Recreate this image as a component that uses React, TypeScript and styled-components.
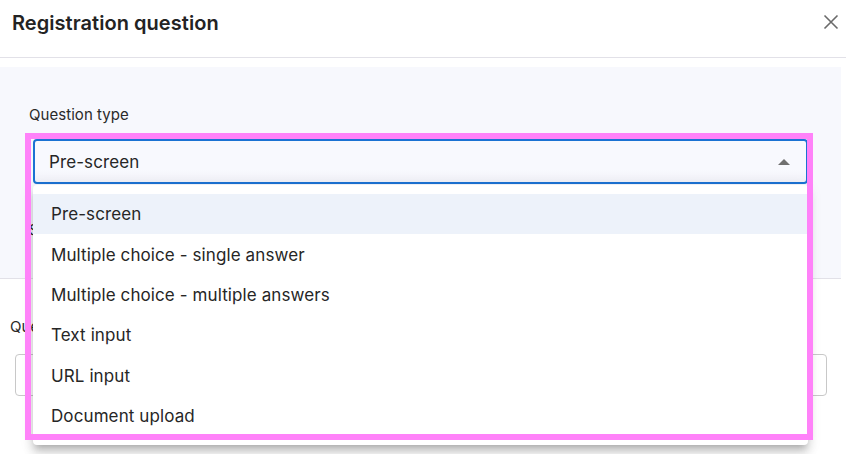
import React from "react";
import styled, { createGlobalStyle } from "styled-components";

const Global = createGlobalStyle`
  html, body { margin: 0; padding: 0; background: #ffffff; }
  body { font-family: Inter, "Noto Sans", "Liberation Sans", sans-serif; color: #262626; }
  * { box-sizing: border-box; }
`;

const Page = styled.div`
  position: relative;
  width: 846px;
  height: 454px;
  overflow: hidden;
  background: #ffffff;
`;

const Header = styled.header`
  height: 58px;
  display: flex;
  align-items: flex-start;
  justify-content: space-between;
  padding: 9px 7px 0 12px;
  border-bottom: 1px solid #e2e1e8;
`;

const Title = styled.h1`
  margin: 0;
  font-size: 20px;
  line-height: 28px;
  font-weight: 600;
  color: #232323;
  letter-spacing: 0.05px;
`;

const CloseButton = styled.button`
  border: none;
  background: none;
  padding: 0;
  margin-top: 5px;
  width: 16px;
  height: 16px;
  display: flex;
  align-items: center;
  justify-content: center;
  cursor: pointer;
`;

const Panel = styled.section`
  margin-top: 9px;
  width: 841px;
  height: 212px;
  background: #f7f8fd;
  border-bottom: 1px solid #e2e1e8;
  padding: 38px 33px 0 33px;
  display: flex;
  flex-direction: column;
`;

const Label = styled.label<{ $indent?: number }>`
  font-size: 15px;
  line-height: 20px;
  letter-spacing: 0.05px;
  color: #2a2a2a;
  margin-left: ${(p) => p.$indent ?? 0}px;
`;

const SelectWrap = styled.div`
  position: relative;
  margin-top: 14px;
`;

const SelectBox = styled.div`
  height: 45px;
  border: 2px solid #1b72d3;
  border-radius: 4px;
  background: linear-gradient(#f8f9fe 70%, #f1f1f8);
  display: flex;
  align-items: center;
  justify-content: space-between;
  padding: 0 14px 0 14px;
  font-size: 17px;
  letter-spacing: 0.1px;
  color: #262626;
`;

const Caret = styled.span`
  width: 0;
  height: 0;
  border-left: 6px solid transparent;
  border-right: 6px solid transparent;
  border-bottom: 6px solid #707070;
  margin-right: 2px;
`;

const HiddenText = styled.div`
  margin-top: 36px;
  margin-left: -4px;
  font-size: 15px;
  color: #2a2a2a;
`;

const Menu = styled.ul`
  position: absolute;
  left: 0;
  right: 0;
  top: 46px;
  margin: 0;
  padding: 9px 0 9px;
  list-style: none;
  background: #ffffff;
  border-radius: 4px;
  box-shadow: 0 5px 6px -3px rgba(0, 0, 0, 0.2), 0 8px 10px 1px rgba(0, 0, 0, 0.12),
    0 3px 14px 2px rgba(0, 0, 0, 0.08);
  z-index: 2;
`;

const MenuItem = styled.li<{ $active?: boolean }>`
  height: 40.4px;
  display: flex;
  align-items: center;
  padding: 0 16px 0 18px;
  font-size: 17px;
  letter-spacing: 0.1px;
  color: #262626;
  background: ${(p) => (p.$active ? "#edf2fa" : "transparent")};
`;

const Section = styled.section`
  padding: 38px 19px 0 10px;
  display: flex;
  flex-direction: column;
`;

const Input = styled.div`
  margin-top: 17px;
  margin-left: 5px;
  height: 42px;
  border: 1px solid #c8c8c8;
  border-radius: 4px;
  background: #ffffff;
`;

const Highlight = styled.div`
  position: absolute;
  left: 25px;
  top: 133px;
  width: 788px;
  height: 307px;
  border: 6px solid #ff82f9;
  pointer-events: none;
  z-index: 5;
`;

const options = [
  "Pre-screen",
  "Multiple choice - single answer",
  "Multiple choice - multiple answers",
  "Text input",
  "URL input",
  "Document upload",
];

export default function App() {
  return (
    <Page>
      <Global />
      <Header>
        <Title>Registration question</Title>
        <CloseButton aria-label="Close">
          <svg width="16" height="16" viewBox="0 0 16 16">
            <path d="M1.5 1.5 L14.5 14.5 M14.5 1.5 L1.5 14.5" stroke="#6a6a6a" strokeWidth="1.6" fill="none" />
          </svg>
        </CloseButton>
      </Header>
      <Panel>
        <Label $indent={-4}>Question type</Label>
        <SelectWrap>
          <SelectBox>
            <span>Pre-screen</span>
            <Caret />
          </SelectBox>
          <Menu>
            {options.map((o, i) => (
              <MenuItem key={o} $active={i === 0}>
                {o}
              </MenuItem>
            ))}
          </Menu>
        </SelectWrap>
        <HiddenText>Screening question</HiddenText>
      </Panel>
      <Section>
        <Label>Question</Label>
        <Input />
      </Section>
      <Highlight />
    </Page>
  );
}
